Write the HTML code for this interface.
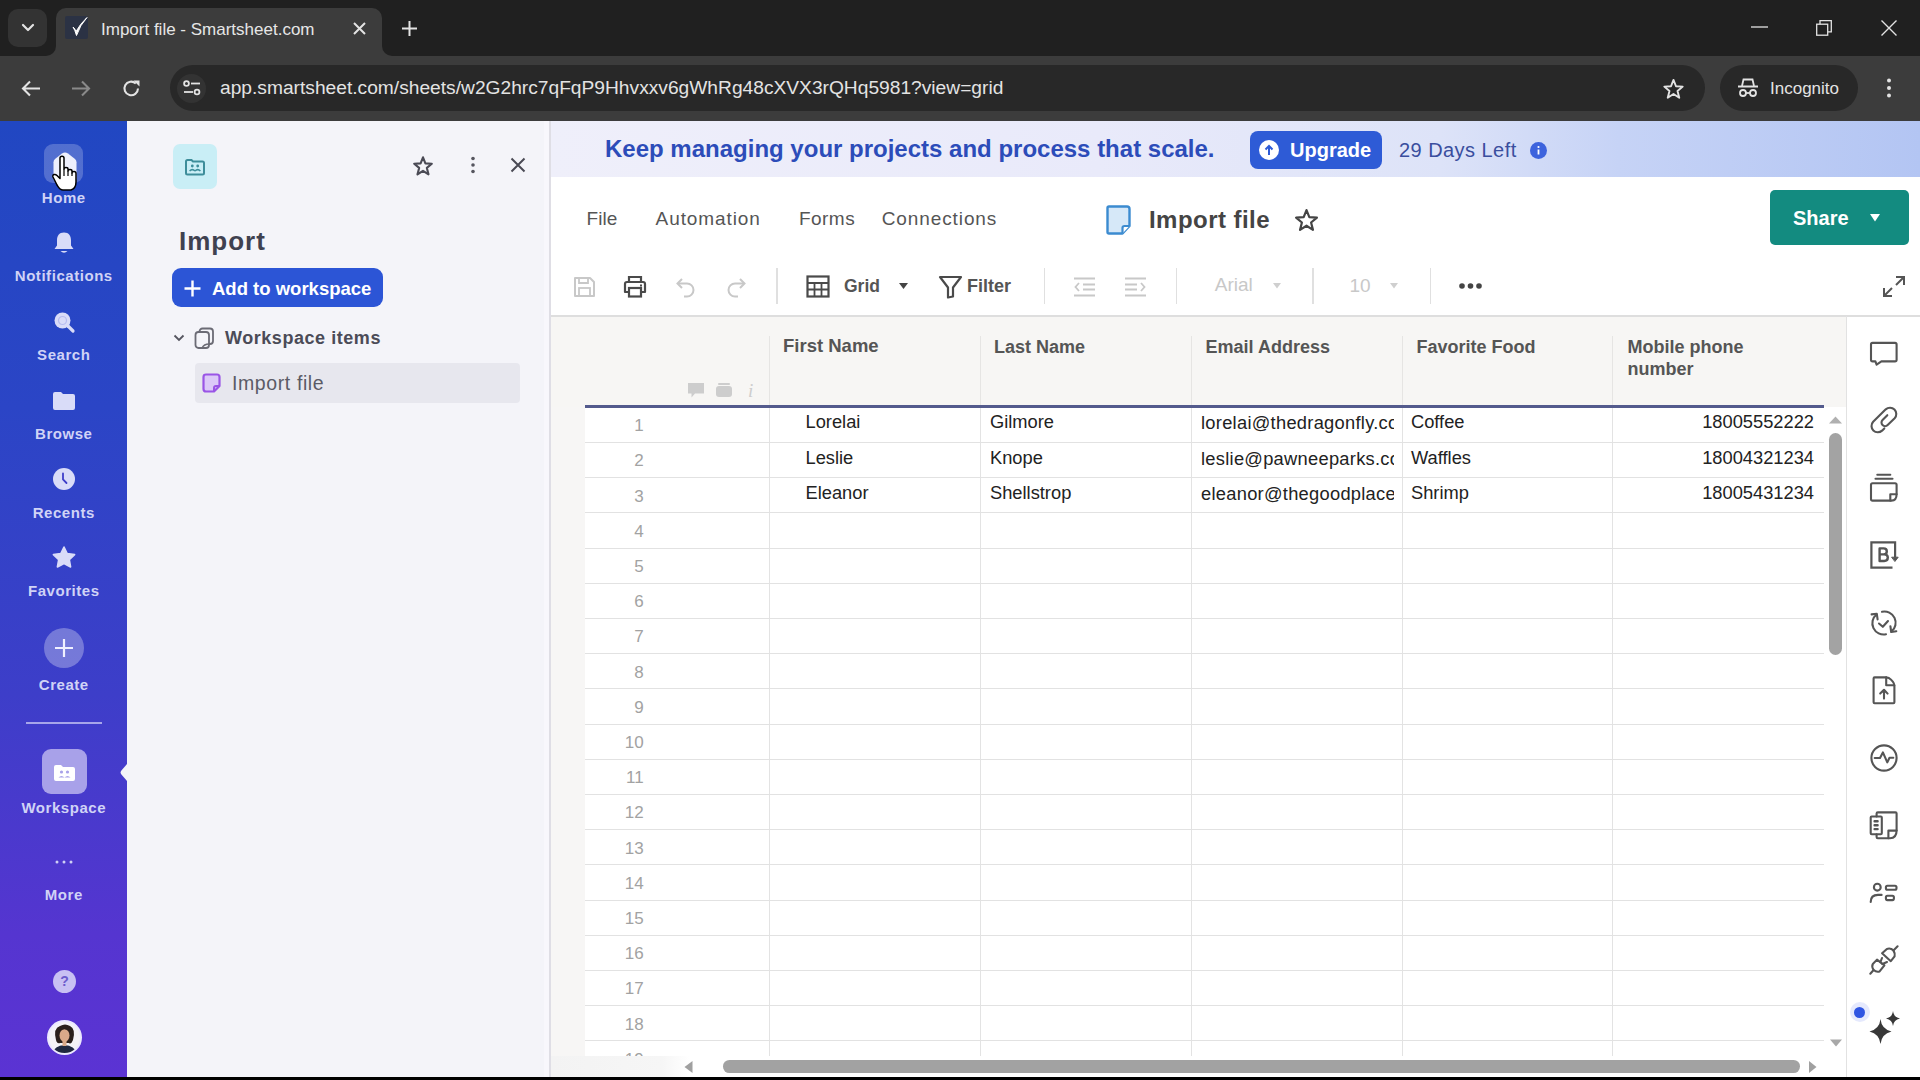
<!DOCTYPE html>
<html><head><meta charset="utf-8">
<style>
*{box-sizing:border-box;margin:0;padding:0}
html,body{width:1920px;height:1080px;overflow:hidden;background:#000;font-family:"Liberation Sans",sans-serif}
.abs{position:absolute}
.t{position:absolute;white-space:nowrap}
svg{position:absolute;overflow:visible}
#tabbar{position:absolute;left:0;top:0;width:1920px;height:56px;background:#202020}
#toolbar{position:absolute;left:0;top:56px;width:1920px;height:65px;background:#3c3c3c}
#nav{position:absolute;left:0;top:121px;width:127px;height:956px;background:linear-gradient(180deg,#2147c2 0%,#2b45c6 30%,#3d3ec9 60%,#5535d0 85%,#5b33d3 100%)}
#ws{position:absolute;left:127px;top:121px;width:424px;height:956px;background:linear-gradient(90deg,#f4f4f9 0,#f4f4f9 417px,#f8f7fc 417px);border-right:2px solid #dfdee5}
#main{position:absolute;left:551px;top:121px;width:1369px;height:956px;background:#fff}
#banner{position:absolute;left:0;top:0;width:1369px;height:56px;background:linear-gradient(90deg,#efeffa 0%,#e9eafa 40%,#dde3f8 65%,#c6d3f6 78%,#b3c5f3 100%)}
.nl{position:absolute;left:0;width:127px;text-align:center;color:#d0d3f6;font-weight:bold;font-size:15px;line-height:15px;letter-spacing:0.55px;text-indent:0.55px}
</style></head>
<body>
<!-- ===== CHROME TAB BAR ===== -->
<div id="tabbar">
  <div class="abs" style="left:8px;top:9px;width:39px;height:38px;border-radius:10px;background:#333"></div>
  <svg style="left:21px;top:23px" width="14" height="9" viewBox="0 0 14 9"><path d="M2 2 L7 7 L12 2" fill="none" stroke="#e3e3e3" stroke-width="2.2" stroke-linecap="round" stroke-linejoin="round"/></svg>
  <div class="abs" style="left:56px;top:8px;width:326px;height:48px;border-radius:10px 10px 0 0;background:#3c3c3c"></div>
  <div class="abs" style="left:46px;top:46px;width:10px;height:10px;background:#3c3c3c"></div>
  <div class="abs" style="left:46px;top:46px;width:10px;height:10px;border-radius:0 0 10px 0;background:#202020"></div>
  <div class="abs" style="left:382px;top:46px;width:10px;height:10px;background:#3c3c3c"></div>
  <div class="abs" style="left:382px;top:46px;width:10px;height:10px;border-radius:0 0 0 10px;background:#202020"></div>
  <div class="abs" style="left:65px;top:16px;width:23px;height:23px;background:#2b3244;border-radius:2px"></div>
  <svg style="left:66px;top:16px" width="22" height="22" viewBox="0 0 22 22"><path d="M7 11 Q9 14 10.5 19.5 Q14 9 21 1.5 Q14 8 10 15.5 Q9 12.5 7 11 Z" fill="#fff" stroke="#fff" stroke-width="1" stroke-linejoin="round"/></svg>
  <div class="t" style="left:101px;top:21px;font-size:17px;line-height:17px;color:#e6e6e6">Import file - Smartsheet.com</div>
  <svg style="left:352px;top:21px" width="15" height="15" viewBox="0 0 15 15"><path d="M2 2 L13 13 M13 2 L2 13" stroke="#e3e3e3" stroke-width="2"/></svg>
  <svg style="left:401px;top:20px" width="17" height="17" viewBox="0 0 17 17"><path d="M8.5 1 V16 M1 8.5 H16" stroke="#e3e3e3" stroke-width="2"/></svg>
  <svg style="left:1751px;top:26px" width="17" height="2" viewBox="0 0 17 2"><path d="M0 1 H17" stroke="#e3e3e3" stroke-width="1.3"/></svg>
  <svg style="left:1816px;top:20px" width="16" height="16" viewBox="0 0 16 16"><rect x="0.7" y="4.2" width="11" height="11" fill="none" stroke="#e3e3e3" stroke-width="1.3"/><path d="M4 4.2 V0.7 H15.3 V11.8 H11.7" fill="none" stroke="#e3e3e3" stroke-width="1.3"/></svg>
  <svg style="left:1881px;top:20px" width="16" height="16" viewBox="0 0 16 16"><path d="M0.5 0.5 L15.5 15.5 M15.5 0.5 L0.5 15.5" stroke="#e3e3e3" stroke-width="1.4"/></svg>
</div>
<!-- ===== CHROME TOOLBAR ===== -->
<div id="toolbar">
  <svg style="left:21px;top:24px" width="20" height="17" viewBox="0 0 20 17"><path d="M19 8.5 H2.5 M9 1.5 L2 8.5 L9 15.5" fill="none" stroke="#e3e3e3" stroke-width="2.1"/></svg>
  <svg style="left:71px;top:24px" width="20" height="17" viewBox="0 0 20 17"><path d="M1 8.5 H17.5 M11 1.5 L18 8.5 L11 15.5" fill="none" stroke="#8a8a8a" stroke-width="2.1"/></svg>
  <svg style="left:122px;top:23px" width="19" height="19" viewBox="0 0 19 19"><path d="M16 9.5 A6.8 6.8 0 1 1 13.8 4.4" fill="none" stroke="#e3e3e3" stroke-width="2.1"/><path d="M11.5 1.5 H17.5 V7.5 Z" fill="#e3e3e3"/></svg>
  <div class="abs" style="left:170px;top:9px;width:1535px;height:46px;border-radius:23px;background:#282828"></div>
  <div class="abs" style="left:177px;top:18px;width:29px;height:29px;border-radius:15px;background:#333"></div>
  <svg style="left:183px;top:24px" width="18" height="16" viewBox="0 0 18 16"><circle cx="3.5" cy="3.5" r="2.4" fill="none" stroke="#e3e3e3" stroke-width="1.8"/><path d="M8 3.5 H17" stroke="#e3e3e3" stroke-width="1.8"/><circle cx="14" cy="12" r="2.4" fill="none" stroke="#e3e3e3" stroke-width="1.8"/><path d="M1 12 H10" stroke="#e3e3e3" stroke-width="1.8"/></svg>
  <div class="t" style="left:220px;top:22px;font-size:19.2px;line-height:20px;color:#e3e3e3">app.smartsheet.com/sheets/w2G2hrc7qFqP9Hhvxxv6gWhRg48cXVX3rQHq5981?view=grid</div>
  <svg style="left:1662px;top:22px" width="23" height="22" viewBox="0 0 24 23"><path d="M12 2 L14.6 8.6 L21.6 9 L16.2 13.6 L18 20.6 L12 16.7 L6 20.6 L7.8 13.6 L2.4 9 L9.4 8.6 Z" fill="none" stroke="#e3e3e3" stroke-width="2" stroke-linejoin="round"/></svg>
  <div class="abs" style="left:1720px;top:9px;width:138px;height:46px;border-radius:23px;background:#282828"></div>
  <svg style="left:1737px;top:22px" width="22" height="20" viewBox="0 0 22 20"><path d="M5 8 L6.5 1.5 H15.5 L17 8" fill="none" stroke="#e3e3e3" stroke-width="1.8"/><path d="M1 8.5 H21" stroke="#e3e3e3" stroke-width="2"/><circle cx="6" cy="15" r="3" fill="none" stroke="#e3e3e3" stroke-width="1.8"/><circle cx="16" cy="15" r="3" fill="none" stroke="#e3e3e3" stroke-width="1.8"/><path d="M9 15 H13" stroke="#e3e3e3" stroke-width="1.8"/></svg>
  <div class="t" style="left:1770px;top:24px;font-size:17px;line-height:17px;color:#e3e3e3">Incognito</div>
  <svg style="left:1886px;top:22px" width="6" height="20" viewBox="0 0 6 20"><circle cx="3" cy="2.5" r="2" fill="#e3e3e3"/><circle cx="3" cy="10" r="2" fill="#e3e3e3"/><circle cx="3" cy="17.5" r="2" fill="#e3e3e3"/></svg>
</div>
<!-- ===== LEFT NAV ===== -->
<div id="nav">
  <div class="abs" style="left:44px;top:23px;width:39px;height:39px;border-radius:9px;background:rgba(255,255,255,0.22)"></div>
  <svg style="left:52px;top:30px" width="26" height="32" viewBox="0 0 26 32"><path d="M13 1.5 Q14.5 1.5 16 2.6 L23 8 Q24.5 9.2 24.5 11.2 V27 Q24.5 30.5 21 30.5 H5 Q1.5 30.5 1.5 27 V11.2 Q1.5 9.2 3 8 L10 2.6 Q11.5 1.5 13 1.5 Z" fill="#eef0fc"/></svg>
  <svg style="left:51px;top:33px" width="30" height="38" viewBox="0 0 30 38"><path d="M9 4 C9 1.5 13 1.5 13 4 V15 C13 13 17 13 17 15 V17 C17 15 21 15 21 17 V19 C21 17 25 17 25 19.5 V28 C25 32 23 35 20 36 H12 C9 36 8 34 6 31 L2 23 C1 20.5 4 19.5 6 21.5 L9 24.5 Z" fill="#fff" stroke="#000" stroke-width="1.5" stroke-linejoin="round"/><path d="M13 15 V22 M17 17 V22 M21 19 V22" stroke="#000" stroke-width="1.2"/></svg>
  <div class="nl" style="top:69px">Home</div>
  <svg style="left:53px;top:110px" width="22" height="24" viewBox="0 0 22 24"><path d="M11 1.5 C6 1.5 4 5 4 9.5 V14.5 L1.5 18 H20.5 L18 14.5 V9.5 C18 5 16 1.5 11 1.5 Z" fill="#d9dcf8"/><path d="M7.5 20 Q11 23.5 14.5 20 Z" fill="#d9dcf8"/></svg>
  <div class="nl" style="top:147px">Notifications</div>
  <svg style="left:53px;top:190px" width="22" height="22" viewBox="0 0 22 22"><circle cx="9.5" cy="9.5" r="8" fill="#d9dcf8"/><circle cx="9.5" cy="9.5" r="4" fill="none" stroke="#b7bcef" stroke-width="1.2"/><path d="M15 15 L20 20" stroke="#d9dcf8" stroke-width="3.2" stroke-linecap="round"/></svg>
  <div class="nl" style="top:226px">Search</div>
  <svg style="left:52px;top:270px" width="24" height="20" viewBox="0 0 24 20"><path d="M1 3 Q1 1 3 1 H9 L11 3 H21 Q23 3 23 5 V17 Q23 19 21 19 H3 Q1 19 1 17 Z" fill="#d9dcf8"/></svg>
  <div class="nl" style="top:305px">Browse</div>
  <svg style="left:53px;top:347px" width="22" height="22" viewBox="0 0 22 22"><circle cx="11" cy="11" r="11" fill="#d9dcf8"/><path d="M10 5.5 V11.5 L13.5 15" fill="none" stroke="#3e3ec9" stroke-width="1.8" stroke-linecap="round"/></svg>
  <div class="nl" style="top:384px">Recents</div>
  <svg style="left:52px;top:425px" width="24" height="23" viewBox="0 0 24 23"><path d="M12 1 L15.2 7.6 L22.6 8.6 L17.3 13.7 L18.6 21 L12 17.5 L5.4 21 L6.7 13.7 L1.4 8.6 L8.8 7.6 Z" fill="#d9dcf8" stroke="#d9dcf8" stroke-width="1.6" stroke-linejoin="round"/></svg>
  <div class="nl" style="top:462px">Favorites</div>
  <div class="abs" style="left:44px;top:507px;width:40px;height:40px;border-radius:20px;background:rgba(255,255,255,0.3)"></div>
  <svg style="left:54px;top:517px" width="20" height="20" viewBox="0 0 20 20"><path d="M10 1 V19 M1 10 H19" stroke="#f0f0ff" stroke-width="2.2"/></svg>
  <div class="nl" style="top:556px">Create</div>
  <div class="abs" style="left:26px;top:601px;width:76px;height:2px;background:#a7a6ea"></div>
  <div class="abs" style="left:42px;top:628px;width:45px;height:45px;border-radius:9px;background:#a8a1e9"></div>
  <svg style="left:53px;top:643px" width="23" height="18" viewBox="0 0 23 18"><path d="M1 3 Q1 1 3 1 H8 L10 3 H20 Q22 3 22 5 V15 Q22 17 20 17 H3 Q1 17 1 15 Z" fill="#fff"/><circle cx="8.5" cy="8" r="1.6" fill="#a8a1e9"/><circle cx="14.5" cy="8" r="1.6" fill="#a8a1e9"/><path d="M5.5 13.5 Q8.5 10.5 11.5 13.5 Z M11.5 13.5 Q14.5 10.5 17.5 13.5 Z" fill="#a8a1e9"/></svg>
  <div class="nl" style="top:679px">Workspace</div>
  <svg style="left:120px;top:643px" width="7" height="17" viewBox="0 0 7 17"><path d="M7 0 L1 7 Q0 8.5 1 10 L7 17 Z" fill="#f4f4f9"/></svg>
  <svg style="left:55px;top:739px" width="18" height="4" viewBox="0 0 18 4"><circle cx="2" cy="2" r="1.5" fill="#cfd0f5"/><circle cx="9" cy="2" r="1.5" fill="#cfd0f5"/><circle cx="16" cy="2" r="1.5" fill="#cfd0f5"/></svg>
  <div class="nl" style="top:766px">More</div>
  <div class="abs" style="left:53px;top:849px;width:23px;height:23px;border-radius:12px;background:#c8c0f3"></div>
  <div class="t" style="left:53px;top:853px;width:23px;text-align:center;font-size:14px;line-height:14px;font-weight:bold;color:#6b5ccc">?</div>
  <svg style="left:47px;top:899px" width="35" height="35" viewBox="0 0 35 35"><defs><clipPath id="av"><circle cx="17.5" cy="17.5" r="15.5"/></clipPath></defs><circle cx="17.5" cy="17.5" r="17.5" fill="#ece8ff"/><g clip-path="url(#av)"><rect x="0" y="0" width="35" height="35" fill="#f4f2f7"/><path d="M9 20 Q6 8 13 6 Q18 3 23 6 Q29 9 26 20 Q24 25 22 23 L13 23 Q10 24 9 20 Z" fill="#2a1f1c"/><ellipse cx="17.5" cy="15.5" rx="5" ry="6.3" fill="#d9a98a"/><path d="M12 11 Q17 7 23 11 L23 8 Q17 4 12 8 Z" fill="#2a1f1c"/><path d="M5 35 Q6 26 17.5 25 Q29 26 30 35 Z" fill="#1f2840"/><rect x="15.5" y="20" width="4" height="6" fill="#d9a98a"/></g></svg>
</div>
<!-- ===== WORKSPACE PANEL ===== -->
<div id="ws">
  <div class="abs" style="left:46px;top:23px;width:44px;height:45px;border-radius:7px;background:#c9eef6"></div>
  <svg style="left:57px;top:37px" width="22" height="18" viewBox="0 0 22 18"><path d="M2 3.5 Q2 2 3.5 2 H7.5 L9 3.5 H18.5 Q20 3.5 20 5 V15 Q20 16.5 18.5 16.5 H3.5 Q2 16.5 2 15 Z" fill="none" stroke="#3d8d9a" stroke-width="2"/><circle cx="8.3" cy="8" r="1.4" fill="#3d8d9a"/><circle cx="13.7" cy="8" r="1.4" fill="#3d8d9a"/><path d="M5.6 13 Q8.3 10.3 11 13 M11 13 Q13.7 10.3 16.4 13" fill="none" stroke="#3d8d9a" stroke-width="1.6"/></svg>
  <svg style="left:285px;top:34px" width="22" height="22" viewBox="0 0 24 23"><path d="M12 2 L14.6 8.6 L21.6 9 L16.2 13.6 L18 20.6 L12 16.7 L6 20.6 L7.8 13.6 L2.4 9 L9.4 8.6 Z" fill="none" stroke="#4a4a55" stroke-width="2.3" stroke-linejoin="round"/></svg>
  <svg style="left:343px;top:35px" width="6" height="18" viewBox="0 0 6 18"><circle cx="3" cy="2.5" r="1.8" fill="#55555f"/><circle cx="3" cy="9" r="1.8" fill="#55555f"/><circle cx="3" cy="15.5" r="1.8" fill="#55555f"/></svg>
  <svg style="left:383px;top:36px" width="16" height="16" viewBox="0 0 16 16"><path d="M1.5 1.5 L14.5 14.5 M14.5 1.5 L1.5 14.5" stroke="#4a4a55" stroke-width="2"/></svg>
  <div class="t" style="left:52px;top:107px;font-size:26px;line-height:26px;font-weight:bold;color:#3f4150;letter-spacing:1px">Import</div>
  <div class="abs" style="left:45px;top:147px;width:211px;height:39px;border-radius:9px;background:#2c55d6"></div>
  <svg style="left:57px;top:159px" width="17" height="17" viewBox="0 0 17 17"><path d="M8.5 0.5 V16.5 M0.5 8.5 H16.5" stroke="#fff" stroke-width="2.4"/></svg>
  <div class="t" style="left:85px;top:158px;font-size:18.5px;line-height:19px;font-weight:bold;color:#fff">Add to workspace</div>
  <svg style="left:46px;top:213px" width="12" height="8" viewBox="0 0 12 8"><path d="M1.5 1.5 L6 6 L10.5 1.5" fill="none" stroke="#55555f" stroke-width="1.8"/></svg>
  <svg style="left:67px;top:206px" width="21" height="23" viewBox="0 0 21 23"><rect x="5.5" y="1.5" width="13.5" height="15.5" rx="3" fill="none" stroke="#6b6b75" stroke-width="1.8"/><rect x="1.5" y="5" width="13.5" height="16" rx="3" fill="#f4f4f9" stroke="#6b6b75" stroke-width="1.8"/><path d="M8 21 Q10 17 15 17" fill="none" stroke="#6b6b75" stroke-width="1.5"/></svg>
  <div class="t" style="left:98px;top:208px;font-size:18px;line-height:18px;font-weight:bold;color:#4b4b57;letter-spacing:0.55px">Workspace items</div>
  <div class="abs" style="left:68px;top:242px;width:325px;height:40px;border-radius:4px;background:#e7e7ee"></div>
  <svg style="left:75px;top:252px" width="19" height="20" viewBox="0 0 19 20"><path d="M4 1.5 H15 Q17.5 1.5 17.5 4 V13 L12 18.5 H4 Q1.5 18.5 1.5 16 V4 Q1.5 1.5 4 1.5 Z" fill="#dcc9f8" stroke="#9a55e6" stroke-width="2.2" stroke-linejoin="round"/><path d="M17.5 13 H14 Q12 13 12 15 V18.5" fill="none" stroke="#9a55e6" stroke-width="2"/></svg>
  <div class="t" style="left:105px;top:252px;font-size:19.5px;line-height:20px;color:#5b5b66;letter-spacing:0.6px">Import file</div>
</div>
<!-- ===== MAIN ===== -->
<div id="main">
  <div id="banner">
    <div class="t" style="left:54px;top:16px;font-size:24px;line-height:24px;font-weight:bold;color:#2c4cb9">Keep managing your projects and process that scale.</div>
    <div class="abs" style="left:699px;top:10px;width:132px;height:38px;border-radius:8px;background:#2e5bd6"></div>
    <div class="abs" style="left:708px;top:19px;width:20px;height:20px;border-radius:10px;background:#fff"></div>
    <svg style="left:713px;top:23px" width="10" height="12" viewBox="0 0 10 12"><path d="M5 11 V2.5 M1.5 5.5 L5 2 L8.5 5.5" fill="none" stroke="#2e5bd6" stroke-width="2"/></svg>
    <div class="t" style="left:739px;top:19px;font-size:20px;line-height:20px;font-weight:bold;color:#fff">Upgrade</div>
    <div class="t" style="left:848px;top:19px;font-size:20px;line-height:20px;color:#3a4e9e;letter-spacing:0.45px">29 Days Left</div>
    <div class="abs" style="left:979px;top:21px;width:17px;height:17px;border-radius:9px;background:#3d63dd"></div>
    <svg style="left:979px;top:21px" width="17" height="17" viewBox="0 0 17 17"><circle cx="8.5" cy="5" r="1.1" fill="#fff"/><path d="M8.5 7.5 V12.5" stroke="#fff" stroke-width="1.8"/></svg>
  </div>
<!--MAINGEN-->
<div class="t" style="left:35.6px;top:87.9px;font-size:19px;line-height:19px;font-weight:normal;color:#555;letter-spacing:0px;">File</div>
<div class="t" style="left:104.6px;top:87.9px;font-size:19px;line-height:19px;font-weight:normal;color:#555;letter-spacing:0.9px;">Automation</div>
<div class="t" style="left:248.0px;top:87.9px;font-size:19px;line-height:19px;font-weight:normal;color:#555;letter-spacing:0.45px;">Forms</div>
<div class="t" style="left:330.7px;top:87.9px;font-size:19px;line-height:19px;font-weight:normal;color:#555;letter-spacing:0.9px;">Connections</div>
<svg style="left:555px;top:84px" width="25" height="30" viewBox="0 0 25 30"><path d="M3 1.5 H21 Q23.5 1.5 23.5 4 V21 L16.5 28.5 H3 Q1.5 28.5 1.5 27 V3 Q1.5 1.5 3 1.5 Z" fill="#d6e8f8" stroke="#3b8bd0" stroke-width="2.4" stroke-linejoin="round"/><path d="M23.5 21 H18.5 Q16.5 21 16.5 23 V28.5" fill="#fff" stroke="#3b8bd0" stroke-width="2.2"/></svg>
<div class="t" style="left:598.0px;top:86.5px;font-size:24px;line-height:24px;font-weight:bold;color:#444;letter-spacing:0.45px;">Import file</div>
<svg style="left:743px;top:87px" width="25" height="25" viewBox="0 0 24 24"><path d="M12 2 L14.7 8.8 L22 9.2 L16.4 13.9 L18.2 21 L12 17 L5.8 21 L7.6 13.9 L2 9.2 L9.3 8.8 Z" fill="none" stroke="#444" stroke-width="2.1" stroke-linejoin="round"/></svg>
<div class="abs" style="left:1219px;top:69px;width:139px;height:55px;border-radius:5px;background:#138b80"></div>
<div class="t" style="left:1242.0px;top:87.0px;font-size:20px;line-height:20px;font-weight:bold;color:#fff;letter-spacing:0px;">Share</div>
<svg style="left:1319px;top:93px" width="10" height="8" viewBox="0 0 10 8"><path d="M0 0 H10 L5 7.5 Z" fill="#fff"/></svg>
<svg style="left:22px;top:155px" width="23" height="22" viewBox="0 0 23 22"><path d="M2 2 H17 L21 6 V20 H2 Z" fill="none" stroke="#c8c8c8" stroke-width="2" stroke-linejoin="round"/><path d="M6 2 V7 H15 V2" fill="none" stroke="#c8c8c8" stroke-width="1.8"/><rect x="6" y="12" width="11" height="8" fill="none" stroke="#c8c8c8" stroke-width="1.8"/></svg>
<svg style="left:72px;top:154px" width="24" height="23" viewBox="0 0 24 23"><path d="M6 7 V2 H18 V7" fill="none" stroke="#4a4a4a" stroke-width="2.2"/><path d="M6 17 H2 V9 Q2 7 4 7 H20 Q22 7 22 9 V17 H18" fill="none" stroke="#4a4a4a" stroke-width="2.2" stroke-linejoin="round"/><rect x="6" y="13" width="12" height="8.5" fill="none" stroke="#4a4a4a" stroke-width="2.2"/><path d="M17 10.5 H19" stroke="#4a4a4a" stroke-width="1.8"/></svg>
<svg style="left:124px;top:156px" width="22" height="21" viewBox="0 0 22 21"><path d="M7 2 L2.5 6.5 L7 11" fill="none" stroke="#c8c8c8" stroke-width="2"/><path d="M3 6.5 H12 A6.5 6.5 0 0 1 12 19.5 H9" fill="none" stroke="#c8c8c8" stroke-width="2"/></svg>
<svg style="left:174px;top:156px" width="22" height="21" viewBox="0 0 22 21"><path d="M15 2 L19.5 6.5 L15 11" fill="none" stroke="#c8c8c8" stroke-width="2"/><path d="M19 6.5 H10 A6.5 6.5 0 0 0 10 19.5 H13" fill="none" stroke="#c8c8c8" stroke-width="2"/></svg>
<div class="abs" style="left:225.1px;top:147px;width:1.5px;height:36px;background:#e0e0e0"></div>
<div class="abs" style="left:492.7px;top:147px;width:1.5px;height:36px;background:#e0e0e0"></div>
<div class="abs" style="left:624.9px;top:147px;width:1.5px;height:36px;background:#e0e0e0"></div>
<div class="abs" style="left:761.2px;top:147px;width:1.5px;height:36px;background:#e0e0e0"></div>
<div class="abs" style="left:878.5px;top:147px;width:1.5px;height:36px;background:#e0e0e0"></div>
<svg style="left:255px;top:154px" width="24" height="23" viewBox="0 0 24 23"><rect x="1.5" y="1.5" width="21" height="20" fill="none" stroke="#4a4a4a" stroke-width="2.2"/><path d="M1.5 8 H22.5 M1.5 14.5 H22.5 M8.5 8 V21.5 M15.5 8 V21.5" stroke="#4a4a4a" stroke-width="1.8"/></svg>
<div class="t" style="left:293.0px;top:156.6px;font-size:17.5px;line-height:17.5px;font-weight:bold;color:#555;letter-spacing:0px;">Grid</div>
<svg style="left:348px;top:162px" width="9" height="6" viewBox="0 0 9 6"><path d="M0 0 H9 L4.5 6 Z" fill="#444"/></svg>
<svg style="left:387px;top:154px" width="25" height="24" viewBox="0 0 25 24"><path d="M2 2 H23 L15 12.5 V21.5 L10 22.5 V12.5 Z" fill="none" stroke="#4a4a4a" stroke-width="2.2" stroke-linejoin="round"/></svg>
<div class="t" style="left:415.9px;top:156.3px;font-size:18px;line-height:18px;font-weight:bold;color:#555;letter-spacing:0px;">Filter</div>
<svg style="left:522px;top:156px" width="23" height="20" viewBox="0 0 23 20"><path d="M1 1.5 H22 M1 18.5 H22 M10 7.5 H22 M10 12.5 H22" stroke="#c8c8c8" stroke-width="1.8"/><path d="M6 6 L2.5 10 L6 14" fill="none" stroke="#c8c8c8" stroke-width="1.8"/></svg>
<svg style="left:573px;top:156px" width="23" height="20" viewBox="0 0 23 20"><path d="M1 1.5 H22 M1 18.5 H22 M1 7.5 H13 M1 12.5 H13" stroke="#c8c8c8" stroke-width="1.8"/><path d="M17 6 L20.5 10 L17 14" fill="none" stroke="#c8c8c8" stroke-width="1.8"/></svg>
<div class="t" style="left:663.8px;top:154.2px;font-size:19px;line-height:19px;font-weight:normal;color:#c8c8c8;letter-spacing:0px;">Arial</div>
<svg style="left:722px;top:162px" width="8" height="6" viewBox="0 0 8 6"><path d="M0 0 H8 L4 5.5 Z" fill="#cfcfcf"/></svg>
<div class="t" style="left:798.5px;top:155.4px;font-size:19px;line-height:19px;font-weight:normal;color:#c8c8c8;letter-spacing:0px;">10</div>
<svg style="left:839px;top:162px" width="8" height="6" viewBox="0 0 8 6"><path d="M0 0 H8 L4 5.5 Z" fill="#cfcfcf"/></svg>
<svg style="left:908px;top:162px" width="23" height="6" viewBox="0 0 23 6"><circle cx="3" cy="3" r="2.8" fill="#444"/><circle cx="11.5" cy="3" r="2.8" fill="#444"/><circle cx="20" cy="3" r="2.8" fill="#444"/></svg>
<svg style="left:1331px;top:154px" width="24" height="23" viewBox="0 0 24 23"><path d="M14 2 H22 V10 M22 2 L14 10 M2 13 V21 H10 M2 21 L10 13" fill="none" stroke="#555" stroke-width="2"/></svg>
<div class="abs" style="left:0;top:194px;width:1369px;height:1.5px;background:#dedede"></div>
<div class="abs" style="left:0;top:195.5px;width:1295px;height:90.5px;background:#f7f6f4"></div>
<div class="abs" style="left:0;top:286px;width:34px;height:649px;background:#f7f6f5"></div>
<div class="abs" style="left:34px;top:286px;width:1239px;height:649px;background:#fff"></div>
<div class="abs" style="left:218.0px;top:215px;width:1px;height:69px;background:#e6e5e3"></div>
<div class="abs" style="left:218.0px;top:286px;width:1px;height:649px;background:#e3e3e3"></div>
<div class="abs" style="left:429.0px;top:215px;width:1px;height:69px;background:#e6e5e3"></div>
<div class="abs" style="left:429.0px;top:286px;width:1px;height:649px;background:#e3e3e3"></div>
<div class="abs" style="left:640.0px;top:215px;width:1px;height:69px;background:#e6e5e3"></div>
<div class="abs" style="left:640.0px;top:286px;width:1px;height:649px;background:#e3e3e3"></div>
<div class="abs" style="left:851.0px;top:215px;width:1px;height:69px;background:#e6e5e3"></div>
<div class="abs" style="left:851.0px;top:286px;width:1px;height:649px;background:#e3e3e3"></div>
<div class="abs" style="left:1061.0px;top:215px;width:1px;height:69px;background:#e6e5e3"></div>
<div class="abs" style="left:1061.0px;top:286px;width:1px;height:649px;background:#e3e3e3"></div>
<div class="abs" style="left:34px;top:284.2px;width:1238.5px;height:2.5px;background:#545b8d"></div>
<div class="t" style="left:232.0px;top:216.3px;font-size:18.5px;line-height:18.5px;font-weight:bold;color:#555;letter-spacing:0px;">First Name</div>
<div class="t" style="left:443.0px;top:216.5px;font-size:18px;line-height:18px;font-weight:bold;color:#555;letter-spacing:0px;">Last Name</div>
<div class="t" style="left:654.6px;top:216.5px;font-size:18px;line-height:18px;font-weight:bold;color:#555;letter-spacing:0px;">Email Address</div>
<div class="t" style="left:865.4px;top:216.5px;font-size:18px;line-height:18px;font-weight:bold;color:#555;letter-spacing:0px;">Favorite Food</div>
<div class="t" style="left:1076.5px;top:216.5px;font-size:18px;line-height:18px;font-weight:bold;color:#555;letter-spacing:0px;">Mobile phone</div>
<div class="t" style="left:1076.5px;top:239.3px;font-size:18px;line-height:18px;font-weight:bold;color:#555;letter-spacing:0px;">number</div>
<svg style="left:136px;top:261px" width="18" height="17" viewBox="0 0 18 17"><path d="M1 1 H17 V11.5 H8 L4.5 15.5 V11.5 H1 Z" fill="#cdcdcd"/></svg>
<svg style="left:164px;top:261px" width="18" height="16" viewBox="0 0 18 16"><rect x="3" y="1" width="12" height="2" rx="1" fill="#cdcdcd"/><rect x="1" y="4" width="16" height="11" rx="3" fill="#cdcdcd"/></svg>
<div class="t" style="left:197px;top:260px;font-family:'Liberation Serif';font-style:italic;font-size:19px;line-height:19px;color:#cdcdcd">i</div>
<div class="abs" style="left:34px;top:321px;width:1239px;height:1px;background:#e2e2e2"></div>
<div class="abs" style="left:34px;top:356px;width:1239px;height:1px;background:#e2e2e2"></div>
<div class="abs" style="left:34px;top:391px;width:1239px;height:1px;background:#e2e2e2"></div>
<div class="abs" style="left:34px;top:427px;width:1239px;height:1px;background:#e2e2e2"></div>
<div class="abs" style="left:34px;top:462px;width:1239px;height:1px;background:#e2e2e2"></div>
<div class="abs" style="left:34px;top:497px;width:1239px;height:1px;background:#e2e2e2"></div>
<div class="abs" style="left:34px;top:532px;width:1239px;height:1px;background:#e2e2e2"></div>
<div class="abs" style="left:34px;top:567px;width:1239px;height:1px;background:#e2e2e2"></div>
<div class="abs" style="left:34px;top:603px;width:1239px;height:1px;background:#e2e2e2"></div>
<div class="abs" style="left:34px;top:638px;width:1239px;height:1px;background:#e2e2e2"></div>
<div class="abs" style="left:34px;top:673px;width:1239px;height:1px;background:#e2e2e2"></div>
<div class="abs" style="left:34px;top:708px;width:1239px;height:1px;background:#e2e2e2"></div>
<div class="abs" style="left:34px;top:743px;width:1239px;height:1px;background:#e2e2e2"></div>
<div class="abs" style="left:34px;top:779px;width:1239px;height:1px;background:#e2e2e2"></div>
<div class="abs" style="left:34px;top:814px;width:1239px;height:1px;background:#e2e2e2"></div>
<div class="abs" style="left:34px;top:849px;width:1239px;height:1px;background:#e2e2e2"></div>
<div class="abs" style="left:34px;top:884px;width:1239px;height:1px;background:#e2e2e2"></div>
<div class="abs" style="left:34px;top:919px;width:1239px;height:1px;background:#e2e2e2"></div>
<div class="t" style="left:34px;width:58.700000000000045px;text-align:right;top:296.1px;font-size:17px;line-height:17px;color:#a2a2a2">1</div>
<div class="t" style="left:34px;width:58.700000000000045px;text-align:right;top:331.3px;font-size:17px;line-height:17px;color:#a2a2a2">2</div>
<div class="t" style="left:34px;width:58.700000000000045px;text-align:right;top:366.5px;font-size:17px;line-height:17px;color:#a2a2a2">3</div>
<div class="t" style="left:34px;width:58.700000000000045px;text-align:right;top:401.7px;font-size:17px;line-height:17px;color:#a2a2a2">4</div>
<div class="t" style="left:34px;width:58.700000000000045px;text-align:right;top:436.9px;font-size:17px;line-height:17px;color:#a2a2a2">5</div>
<div class="t" style="left:34px;width:58.700000000000045px;text-align:right;top:472.1px;font-size:17px;line-height:17px;color:#a2a2a2">6</div>
<div class="t" style="left:34px;width:58.700000000000045px;text-align:right;top:507.3px;font-size:17px;line-height:17px;color:#a2a2a2">7</div>
<div class="t" style="left:34px;width:58.700000000000045px;text-align:right;top:542.5px;font-size:17px;line-height:17px;color:#a2a2a2">8</div>
<div class="t" style="left:34px;width:58.700000000000045px;text-align:right;top:577.7px;font-size:17px;line-height:17px;color:#a2a2a2">9</div>
<div class="t" style="left:34px;width:58.700000000000045px;text-align:right;top:612.9px;font-size:17px;line-height:17px;color:#a2a2a2">10</div>
<div class="t" style="left:34px;width:58.700000000000045px;text-align:right;top:648.1px;font-size:17px;line-height:17px;color:#a2a2a2">11</div>
<div class="t" style="left:34px;width:58.700000000000045px;text-align:right;top:683.3px;font-size:17px;line-height:17px;color:#a2a2a2">12</div>
<div class="t" style="left:34px;width:58.700000000000045px;text-align:right;top:718.5px;font-size:17px;line-height:17px;color:#a2a2a2">13</div>
<div class="t" style="left:34px;width:58.700000000000045px;text-align:right;top:753.7px;font-size:17px;line-height:17px;color:#a2a2a2">14</div>
<div class="t" style="left:34px;width:58.700000000000045px;text-align:right;top:788.9px;font-size:17px;line-height:17px;color:#a2a2a2">15</div>
<div class="t" style="left:34px;width:58.700000000000045px;text-align:right;top:824.1px;font-size:17px;line-height:17px;color:#a2a2a2">16</div>
<div class="t" style="left:34px;width:58.700000000000045px;text-align:right;top:859.3px;font-size:17px;line-height:17px;color:#a2a2a2">17</div>
<div class="t" style="left:34px;width:58.700000000000045px;text-align:right;top:894.5px;font-size:17px;line-height:17px;color:#a2a2a2">18</div>
<div class="t" style="left:34px;width:58.700000000000045px;text-align:right;top:929.7px;font-size:17px;line-height:17px;color:#a2a2a2">19</div>
<div class="abs" style="left:34px;top:935px;width:1261px;height:21px;background:#fff"></div>
<div class="t" style="left:254.5px;top:292.4px;font-size:18.3px;line-height:18.3px;font-weight:normal;color:#222;letter-spacing:0px;">Lorelai</div>
<div class="t" style="left:439.0px;top:292.4px;font-size:18.3px;line-height:18.3px;font-weight:normal;color:#222;letter-spacing:0px;">Gilmore</div>
<div class="t" style="left:650px;top:292.4px;width:193px;overflow:hidden;font-size:18.3px;line-height:20.3px;letter-spacing:0.28px;color:#222">lorelai@thedragonfly.com</div>
<div class="t" style="left:860.0px;top:292.4px;font-size:18.3px;line-height:18.3px;font-weight:normal;color:#222;letter-spacing:0px;">Coffee</div>
<div class="t" style="left:1061.5px;width:201.5px;text-align:right;top:292.4px;font-size:18.3px;line-height:18.3px;color:#222">18005552222</div>
<div class="t" style="left:254.5px;top:327.6px;font-size:18.3px;line-height:18.3px;font-weight:normal;color:#222;letter-spacing:0px;">Leslie</div>
<div class="t" style="left:439.0px;top:327.6px;font-size:18.3px;line-height:18.3px;font-weight:normal;color:#222;letter-spacing:0px;">Knope</div>
<div class="t" style="left:650px;top:327.6px;width:193px;overflow:hidden;font-size:18.3px;line-height:20.3px;letter-spacing:0.28px;color:#222">leslie@pawneeparks.com</div>
<div class="t" style="left:860.0px;top:327.6px;font-size:18.3px;line-height:18.3px;font-weight:normal;color:#222;letter-spacing:0px;">Waffles</div>
<div class="t" style="left:1061.5px;width:201.5px;text-align:right;top:327.6px;font-size:18.3px;line-height:18.3px;color:#222">18004321234</div>
<div class="t" style="left:254.5px;top:362.8px;font-size:18.3px;line-height:18.3px;font-weight:normal;color:#222;letter-spacing:0px;">Eleanor</div>
<div class="t" style="left:439.0px;top:362.8px;font-size:18.3px;line-height:18.3px;font-weight:normal;color:#222;letter-spacing:0px;">Shellstrop</div>
<div class="t" style="left:650px;top:362.8px;width:193px;overflow:hidden;font-size:18.3px;line-height:20.3px;letter-spacing:0.28px;color:#222">eleanor@thegoodplace.com</div>
<div class="t" style="left:860.0px;top:362.8px;font-size:18.3px;line-height:18.3px;font-weight:normal;color:#222;letter-spacing:0px;">Shrimp</div>
<div class="t" style="left:1061.5px;width:201.5px;text-align:right;top:362.8px;font-size:18.3px;line-height:18.3px;color:#222">18005431234</div>
<svg style="left:1278px;top:295px" width="13" height="8" viewBox="0 0 13 8"><path d="M0 7.5 L6.5 0.5 L13 7.5 Z" fill="#b0b0b0"/></svg>
<div class="abs" style="left:1278px;top:312px;width:12.5px;height:222px;border-radius:6.5px;background:#a3a3a3"></div>
<svg style="left:1278.5px;top:918px" width="12" height="8" viewBox="0 0 12 8"><path d="M0 0.5 L6 7.5 L12 0.5 Z" fill="#a8a8a8"/></svg>
<div class="abs" style="left:0;top:935px;width:139px;height:21px;background:linear-gradient(90deg,#f3f3f3 0%,#f6f6f6 80%,#fff 100%)"></div>
<svg style="left:133px;top:940px" width="9" height="12" viewBox="0 0 9 12"><path d="M8.5 0 L0.5 6 L8.5 12 Z" fill="#a0a0a0"/></svg>
<div class="abs" style="left:172px;top:939px;width:1077px;height:12.8px;border-radius:6.4px;background:#a2a2a2"></div>
<svg style="left:1258px;top:940px" width="8" height="12" viewBox="0 0 8 12"><path d="M0 0 L7.5 6 L0 12 Z" fill="#a0a0a0"/></svg>
<div class="abs" style="left:1294.5px;top:195px;width:1.3px;height:761px;background:#e2e2e2"></div>
<svg style="left:1313px;top:213px" width="40" height="40" viewBox="0 0 40 40" fill="none" stroke="#555" stroke-width="2.1" stroke-linejoin="round" stroke-linecap="round"><path d="M8.5 8.9 H31 Q32.6 8.9 32.6 10.5 V25.8 Q32.6 27.4 31 27.4 H17.4 L12.6 30.6 L11.4 27.4 H8.6 Q7 27.4 7 25.8 V10.5 Q7 8.9 8.5 8.9 Z"/></svg>
<svg style="left:1313px;top:279px" width="40" height="40" viewBox="0 0 40 40" fill="none" stroke="#555" stroke-width="2.1" stroke-linejoin="round" stroke-linecap="round"><path d="M20.3 28.4 L18.05 30.65 A6.3 6.3 0 0 1 9.15 21.75 L21.75 9.35 A6.3 6.3 0 0 1 30.65 18.25 L23.65 25.05 A3.6 3.6 0 0 1 18.55 19.95 L23.3 15.2"/></svg>
<svg style="left:1313px;top:347px" width="40" height="40" viewBox="0 0 40 40" fill="none" stroke="#555" stroke-width="2.1" stroke-linejoin="round" stroke-linecap="round"><path d="M13.3 6.7 H26.3 M11.5 10.7 H28.5"/><path d="M8.6 15.2 H31 Q32.6 15.2 32.6 16.8 V26.3 Q32.6 32.6 27.5 32.6 H8.6 Q7 32.6 7 31 V16.8 Q7 15.2 8.6 15.2 Z"/><path d="M26.3 32.6 V26.3 H32.6"/></svg>
<svg style="left:1313px;top:414px" width="40" height="40" viewBox="0 0 40 40" fill="none" stroke="#555" stroke-width="2.1" stroke-linejoin="round" stroke-linecap="round"><path d="M28.5 32.6 H7.4 V7.4 H31.1 V22.5" stroke-linecap="butt" stroke-linejoin="miter" stroke-width="2.2"/><path d="M28 22.2 H34.2 L31.1 26.2 Z" fill="#555" stroke-width="1"/><path d="M15.6 13.4 V26 H20.2 Q23.8 26 23.8 22.6 Q23.8 19.4 20.2 19.4 H15.6 M15.6 19.4 H19.6 Q22.8 19.4 22.8 16.4 Q22.8 13.4 19.6 13.4 H15.6" stroke-width="2.4"/></svg>
<svg style="left:1313px;top:482px" width="40" height="40" viewBox="0 0 40 40" fill="none" stroke="#555" stroke-width="2.1" stroke-linejoin="round" stroke-linecap="round"><path d="M18 8.7 A11.3 11.3 0 0 1 27.5 28.5"/><path d="M26.4 23.2 L27.2 29 L32.3 28.2"/><path d="M22 31.3 A11.3 11.3 0 0 1 12.5 11.5"/><path d="M7.6 11.4 L12.8 10.8 L13.6 16.4"/><path d="M15 20.5 L18.8 23.8 L24 18"/></svg>
<svg style="left:1313px;top:549px" width="40" height="40" viewBox="0 0 40 40" fill="none" stroke="#555" stroke-width="2.1" stroke-linejoin="round" stroke-linecap="round"><path d="M10.6 7.4 H22.2 Q25 7.4 27 9.6 L28.8 11.6 Q30.4 13.4 30.4 16 V32.3 Q30.4 33.3 29.4 33.3 H10.6 Q9.6 33.3 9.6 32.3 V8.4 Q9.6 7.4 10.6 7.4 Z"/><path d="M22.2 7.4 V15.2 H30.4"/><path d="M20 28.6 V20.6 M16.2 23.6 L20 19.8 L23.6 23.6"/></svg>
<svg style="left:1313px;top:617px" width="40" height="40" viewBox="0 0 40 40" fill="none" stroke="#555" stroke-width="2.1" stroke-linejoin="round" stroke-linecap="round"><circle cx="20" cy="20" r="12.6"/><path d="M10.7 20 H16 L18.9 14.4 L23.3 24.4 L25.5 19.8 H29.3"/></svg>
<svg style="left:1313px;top:684px" width="40" height="40" viewBox="0 0 40 40" fill="none" stroke="#555" stroke-width="2.1" stroke-linejoin="round" stroke-linecap="round"><path d="M12.6 11.5 V8.6 Q12.6 7.4 13.8 7.4 H31.4 Q32.6 7.4 32.6 8.6 V25.6 Q32.6 33.3 26 33.3 H13.8 Q12.6 33.3 12.6 32.1 V29.3"/><path d="M24.4 33.3 V25.6 H32.6"/><rect x="6.7" y="11.5" width="11.1" height="17.8" rx="1"/><path d="M10.6 16.3 H13.6 M10.6 20.2 H13.6 M10.6 24.1 H13.6" stroke-width="2.4"/></svg>
<svg style="left:1313px;top:751px" width="40" height="40" viewBox="0 0 40 40" fill="none" stroke="#555" stroke-width="2.1" stroke-linejoin="round" stroke-linecap="round"><circle cx="13.3" cy="15.2" r="3.4"/><path d="M6.7 30 Q6.7 22.9 14 22.9 H17.6"/><rect x="21.9" y="13.8" width="10.6" height="3.9" rx="1.5"/><rect x="21.9" y="23.8" width="8" height="4.3" rx="1.5"/></svg>
<svg style="left:1313px;top:819px" width="40" height="40" viewBox="0 0 40 40" fill="none" stroke="#555" stroke-width="2.1" stroke-linejoin="round" stroke-linecap="round"><path d="M6.3 33.7 L9.6 30"/><path d="M9.6 30 Q7.4 26.5 8.8 24 L13 19.6 L20.4 25.4 L15.6 31.4 Q12.4 32.4 9.6 30 Z"/><path d="M16.4 22.2 L18 18 M18.4 24 L23 22"/><path d="M18.1 13.3 L22.6 9.2 Q24.8 8 27.2 8.9 L29.4 10.4 Q31.2 13.2 30.6 16.4 L26.8 21.2 Z"/><path d="M29.4 10.4 L33.6 6.3"/></svg>
<div class="abs" style="left:1298.8px;top:881px;width:20px;height:20px;border-radius:10px;background:rgba(80,110,240,0.15)"></div>
<div class="abs" style="left:1303.3px;top:885.5px;width:11px;height:11px;border-radius:6px;background:#2f55e2"></div>
<svg style="left:1317px;top:896px" width="26" height="27" viewBox="0 0 26 27"><path d="M12.5 2 Q13.5 12 23.5 14.5 Q13.5 17 12.5 27 Q11.5 17 1.5 14.5 Q11.5 12 12.5 2 Z" fill="#383838"/></svg>
<svg style="left:1334px;top:889px" width="16" height="17" viewBox="0 0 16 17"><path d="M8 1 Q8.7 7.3 15 8.5 Q8.7 9.7 8 16 Q7.3 9.7 1 8.5 Q7.3 7.3 8 1 Z" fill="#383838"/></svg>
<!--/MAINGEN-->
</div>
</body></html>
